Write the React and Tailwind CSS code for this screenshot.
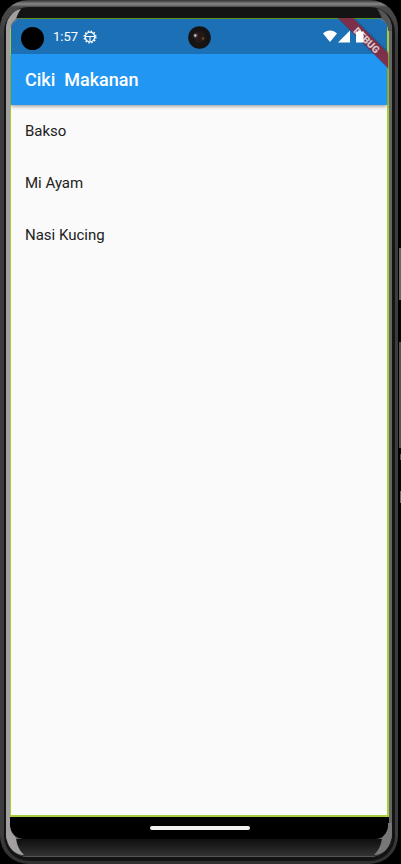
import React from "react";

const dishes = ["Bakso", "Mi Ayam", "Nasi Kucing"];

function StatusBar() {
  return (
    <div className="relative flex h-9 items-center border-t border-[#5c8f1c] bg-[#1c70b6] pl-[10px] pr-[22px] text-white">
      <span className="mt-1 size-[23px] rounded-full bg-black" />
      <span className="ml-[9px] text-[13px] leading-4">1:57</span>
      <svg className="ml-[5px] size-[14px]" viewBox="0 0 14 14" fill="none" stroke="#fff">
        <circle cx="7" cy="7" r="4.8" strokeWidth="1.3" />
        <circle cx="7" cy="7" r="5.9" strokeWidth="1.3" strokeDasharray="1.54 1.55" />
        <path d="M2.5 6.5h9M7 6.5v5" strokeWidth="1.1" />
      </svg>
      <svg className="absolute left-1/2 top-[7px] h-[23px] w-[24px] -translate-x-1/2" viewBox="-1 0 24 23">
        <circle cx="11.5" cy="11.5" r="11.3" fill="#151313" />
        <circle cx="11.5" cy="11" r="6" fill="#241918" />
        <circle cx="7.5" cy="9.5" r="2.2" fill="#5d4f50" />
        <circle cx="7.2" cy="9.6" r="1" fill="#d8e4df" />
        <circle cx="15" cy="12.5" r="1.3" fill="#7a4516" />
      </svg>
      <svg className="relative z-20 ml-auto h-[13px] w-[42px]" viewBox="0 0 42 13" fill="#fff">
        <path d="M0 3.4C4-.6 10-.6 14 3.4L7 12Z" />
        <path d="M27 .5V12.5H15Z" />
        <path d="M33 1.5h2V.5h3v1h2.5v11H33Z" />
      </svg>
    </div>
  );
}

function DebugRibbon() {
  return (
    <svg className="absolute right-0 top-0 z-10 size-[52px]" viewBox="0 0 52 52">
      <path d="M0 0H18L52 34V52Z" fill="#000" opacity=".12" />
      <path d="M1 0H16L51 35V50Z" fill="#862a40" opacity=".92" />
      <text
        x="0"
        y="4"
        transform="translate(30 22) rotate(45)"
        textAnchor="middle"
        fontFamily="Roboto, sans-serif"
        fontSize="10"
        fontWeight="900"
        fill="#d6c6cb"
      >
        DEBUG
      </text>
    </svg>
  );
}

function TopGlint({ className }) {
  return (
    <svg className={`absolute h-[24px] w-[16px] ${className}`} viewBox="0 0 16 24" fill="currentColor">
      <path d="M0 24C0 12 5 3 15 2C12 6 11 9 10 12C7 14 4 18 4 24Z" />
    </svg>
  );
}

function BottomGlint({ className }) {
  return (
    <svg className={`absolute h-[34px] w-[20px] ${className}`} viewBox="0 0 20 34" fill="currentColor">
      <path d="M0 0H4V4C5 10 8 12 10 15C11 22 13 27 18 32C7 32 0 22 0 10Z" />
    </svg>
  );
}

export default function App() {
  return (
    <div className="relative flex min-h-screen bg-black pr-[3px] font-[Roboto,sans-serif]">
      <div className="flex flex-1 rounded-[28px] bg-[linear-gradient(#333,#888_4px,#4a4a4a_7px,#3c3c3c_40px,#3c3c3c_calc(100%-30px),#303030)] pb-[3px] pl-[4px] pr-[3px] pt-[7px]">
        <div className="flex flex-1 rounded-[25px] bg-[#131313] pb-[4px] pl-[2px] pr-[3px]">
          <div className="relative flex flex-1 flex-col overflow-hidden rounded-[22px] bg-[linear-gradient(90deg,#a39f9f,#a39f9f_4px,#666_5px,#666)] pl-[4px] pr-[3px]">
            <div className="-mx-1 h-[11px] bg-[#141414]" />
            <main className="relative flex flex-1 flex-col overflow-hidden rounded-[14px] bg-black">
              <div className="flex flex-1 flex-col border-b-2 border-l border-r-2 border-[#a6ce39] bg-[#fafafa]">
                <StatusBar />
                <header className="flex h-[51px] items-center bg-[#2196f3] px-[14px] shadow-[0_1px_4px_rgba(0,0,0,0.45)]">
                  <h1 className="whitespace-pre text-lg font-medium text-white">Ciki  Makanan</h1>
                </header>
                <ul>
                  {dishes.map((dish) => (
                    <li key={dish} className="flex h-[52px] items-center px-[14px] text-[15px] text-[#212121]">
                      {dish}
                    </li>
                  ))}
                </ul>
              </div>
              <div className="flex h-[22px] items-center justify-center">
                <span className="h-1 w-[100px] rounded-full bg-[#f1f1f1]" />
              </div>
              <DebugRibbon />
            </main>
            <div className="-mx-1 h-[18px] border-b border-[#555] bg-linear-to-b from-[#0f0f0f] to-[#333]" />
            <TopGlint className="left-0 top-0 text-[#a39f9f]" />
            <TopGlint className="right-0 top-0 -scale-x-100 text-[#555]" />
            <BottomGlint className="bottom-0 left-0 text-[#a39f9f]" />
            <BottomGlint className="bottom-0 right-0 -scale-x-100 text-[#777]" />
          </div>
        </div>
      </div>
      <span className="absolute right-0 top-[248px] h-[52px] w-[2px] bg-[#666]" />
      <span className="absolute right-0 top-[342px] h-[106px] w-[2px] bg-[#555]" />
      <span className="absolute right-0 top-[454px] h-[6px] w-px bg-[#555]" />
      <span className="absolute right-0 top-[491px] h-[12px] w-px bg-[#666]" />
    </div>
  );
}
